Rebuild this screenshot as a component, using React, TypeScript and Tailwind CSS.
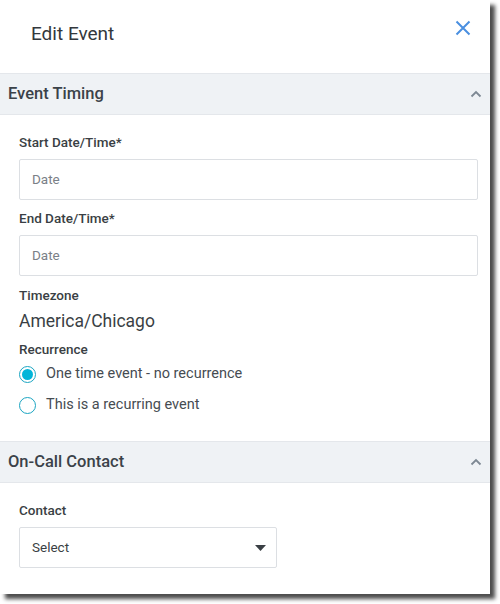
import React from "react";

const SectionHeader: React.FC<{ title: string }> = ({ title }) => (
  <div className="flex items-center justify-between h-[42px] pl-2 pr-[8px] bg-[#eff2f5] border-y border-[#e4e7eb]">
    <span className="text-[16.5px] font-medium text-[#3b4249]">{title}</span>
    <svg width="12" height="8" viewBox="0 0 12 8" fill="none">
      <path d="M1.5 6.5 L6 2 L10.5 6.5" stroke="#7d8893" strokeWidth="1.8" />
    </svg>
  </div>
);

const Label: React.FC<{ text: string; className?: string }> = ({ text, className }) => (
  <div className={"text-[13.5px] leading-[17px] font-medium text-[#3a3f44] " + (className || "")}>
    {text}
  </div>
);

const DateInput: React.FC = () => (
  <div className="h-[41px] border border-[#dcdfe3] rounded-[2px] flex items-center px-3">
    <span className="text-[13.5px] text-[#7a8087]">Date</span>
  </div>
);

const Radio: React.FC<{ checked?: boolean; label: string; className?: string }> = ({
  checked,
  label,
  className,
}) => (
  <div className={"flex items-center h-[24px] " + (className || "")}>
    <div className="w-[17px] h-[17px] rounded-full border-[1.5px] border-[#1ba5c2] flex items-center justify-center">
      {checked && <div className="w-[11px] h-[11px] rounded-full bg-[#00b5d9]" />}
    </div>
    <span className="ml-[10px] text-[14.5px] text-[#464c52]">{label}</span>
  </div>
);

const App: React.FC = () => {
  return (
    <div className="w-[500px] h-[604px] bg-white" style={{ fontFamily: "Roboto, 'Liberation Sans', sans-serif" }}>
      <div className="w-[490px] bg-white shadow-[5px_5px_4px_rgba(0,0,0,0.7)] pb-[26px]">
        <div className="h-[73px] flex items-center justify-between pl-[31px] pr-[19px]">
          <h1 className="text-[19px] text-[#33383d] -mt-[4px]">Edit Event</h1>
          <svg width="16" height="16" viewBox="0 0 16 16" className="-mt-[18px]">
            <path d="M1.5 1.5 L14.5 14.5 M14.5 1.5 L1.5 14.5" stroke="#4a8fe0" strokeWidth="2" />
          </svg>
        </div>

        <SectionHeader title="Event Timing" />

        <div className="pl-[19px] pr-[12px] pt-[19px] pb-[24px]">
          <Label text="Start Date/Time*" className="mb-2" />
          <DateInput />
          <Label text="End Date/Time*" className="mt-[10px] mb-2" />
          <DateInput />
          <Label text="Timezone" className="mt-[11px]" />
          <div className="mt-[6px] text-[17.5px] leading-[22px] text-[#3a3f44]">America/Chicago</div>
          <Label text="Recurrence" className="mt-[9px]" />
          <Radio checked label="One time event - no recurrence" className="mt-[4px]" />
          <Radio label="This is a recurring event" className="mt-[7px]" />
        </div>

        <SectionHeader title="On-Call Contact" />

        <div className="px-[19px] pt-[19px]">
          <Label text="Contact" className="mb-2" />
          <div className="w-[258px] h-[41px] border border-[#dcdfe3] rounded-[2px] flex items-center justify-between pl-3 pr-[10px]">
            <span className="text-[13.5px] text-[#3a3f44]">Select</span>
            <svg width="11" height="6" viewBox="0 0 11 6">
              <path d="M0 0 L11 0 L5.5 6 Z" fill="#3a3f44" />
            </svg>
          </div>
        </div>
      </div>
    </div>
  );
};

export default App;
